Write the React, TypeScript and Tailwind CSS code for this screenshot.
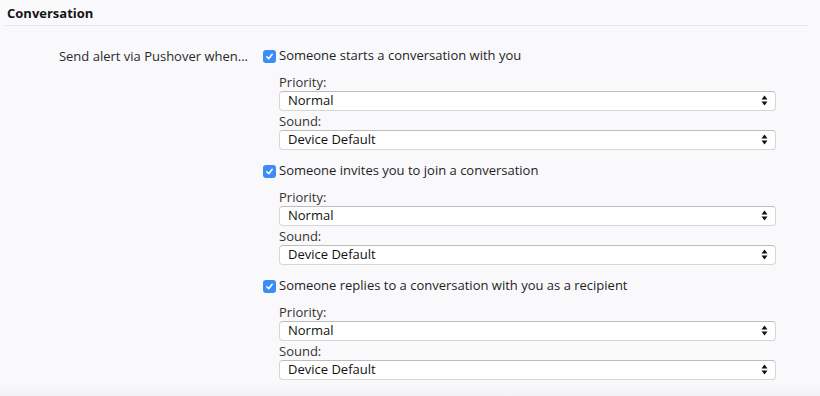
import React from 'react';

const options = [
  'Someone starts a conversation with you',
  'Someone invites you to join a conversation',
  'Someone replies to a conversation with you as a recipient',
];

const Select: React.FC<{ value: string }> = ({ value }) => (
  <div className="flex h-[20px] items-center justify-between rounded-[4px] border border-[#d6d6d6] border-t-[#bdbdbd] bg-white pb-[1px] pl-[8px] pr-[6px] text-[13px] leading-none text-[#111]">
    <span>{value}</span>
    <svg width="7" height="11" viewBox="0 0 7 11" className="mr-[1px]">
      <path d="M3.5 0.5 L6.5 4.5 L0.5 4.5 Z" fill="#111" />
      <path d="M3.5 10.5 L6.5 6.5 L0.5 6.5 Z" fill="#111" />
    </svg>
  </div>
);

const Check: React.FC = () => (
  <span className="flex h-[13px] w-[13px] items-center justify-center rounded-[3px] bg-[#3b8df5]">
    <svg width="9" height="9" viewBox="0 0 9 9">
      <path d="M1.8 4.8 L3.7 6.7 L7.2 2.3" stroke="white" strokeWidth="1.6" fill="none" strokeLinecap="round" strokeLinejoin="round" />
    </svg>
  </span>
);

export default function App() {
  return (
    <div className="min-h-[396px] bg-[#f9f9fb] pl-[5px] pr-[12px] font-['Open_Sans',sans-serif] text-[13px] text-[#222]">
      <div className="flex h-[26px] items-end border-b border-[#e6e6ea] pb-[3px] pl-[2px]">
        <h3 className="text-[13px] font-bold leading-[18px] text-[#141414]">Conversation</h3>
      </div>

      <div className="mt-[21px] flex">
        <div className="w-[243px] shrink-0 text-right leading-[18px] text-[#2a2a2a]">Send alert via Pushover when...</div>
        <div className="ml-[15px] flex w-[513px] flex-col gap-[12px]">
          {options.map((label) => (
            <div key={label} className="flex flex-col">
              <label className="flex h-[18px] items-center">
                <Check />
                <span className="ml-[3px] text-[#1e1e1e]">{label}</span>
              </label>
              <div className="ml-[16px] flex flex-col">
                <div className="mt-[9px] h-[17px] leading-[17px] text-[#333]">Priority:</div>
                <Select value="Normal" />
                <div className="mt-[1px] h-[18px] leading-[18px] text-[#333]">Sound:</div>
                <Select value="Device Default" />
              </div>
            </div>
          ))}
        </div>
      </div>
      <div className="mt-[5px] -ml-[5px] -mr-[12px] h-[11px] bg-gradient-to-b from-[#f9f9fb] to-[#f2f2f4]" />
    </div>
  );
}
